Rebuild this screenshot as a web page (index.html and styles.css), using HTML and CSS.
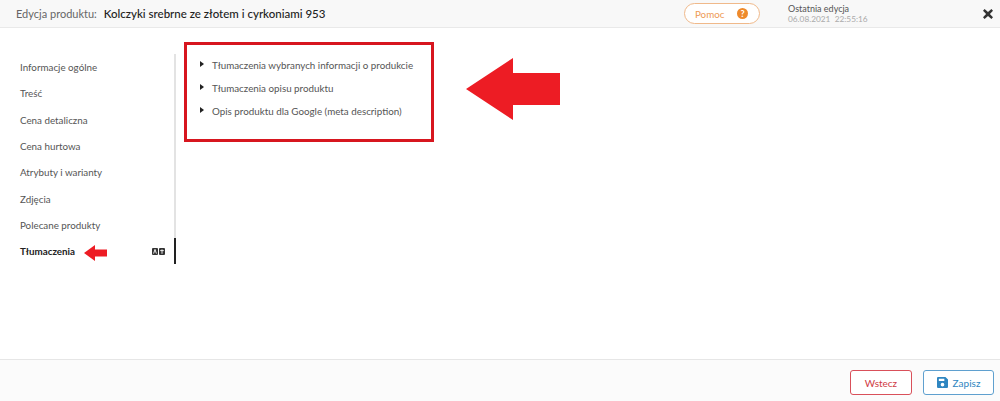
FILE: index.html
```html
<!DOCTYPE html>
<html lang="pl">
<head>
  <meta charset="UTF-8">
  <title>Edycja produktu</title>
  <link rel="stylesheet" href="styles.css">
</head>
<body>

<header class="topbar">
  <div class="title">
    <span class="title-label">Edycja produktu:</span>
    <span class="title-name">Kolczyki srebrne ze złotem i cyrkoniami 953</span>
  </div>
  <a class="help">
    <span>Pomoc</span>
    <span class="help-mark">?</span>
  </a>
  <div class="last-edit">
    <div class="last-edit-label">Ostatnia edycja</div>
    <div class="last-edit-date">06.08.2021 &nbsp;22:55:16</div>
  </div>
  <svg class="close" viewBox="0 0 10 10" width="10" height="10">
    <path d="M1.6 0 L5 3.1 L8.4 0 L10 1.7 L6.9 5 L10 8.3 L8.4 10 L5 6.9 L1.6 10 L0 8.3 L3.1 5 L0 1.7 Z" fill="#333"/>
  </svg>
</header>

<main class="content">
  <nav class="sidebar">
    <a class="nav-item">Informacje ogólne</a>
    <a class="nav-item">Treść</a>
    <a class="nav-item">Cena detaliczna</a>
    <a class="nav-item">Cena hurtowa</a>
    <a class="nav-item">Atrybuty i warianty</a>
    <a class="nav-item">Zdjęcia</a>
    <a class="nav-item">Polecane produkty</a>
    <a class="nav-item active">
      Tłumaczenia
      <svg class="nav-arrow" viewBox="0 0 23 16" width="23" height="16">
        <path d="M0 8 L11 0 L11 4.5 L23 4.5 L23 11.5 L11 11.5 L11 16 Z" fill="#ed1c24"/>
      </svg>
      <svg class="lang-icon" viewBox="0 0 13 7" width="13" height="7">
        <rect x="0" y="0" width="6" height="7" rx="1" fill="#333"/>
        <rect x="7" y="0" width="6" height="7" rx="1" fill="#333"/>
        <path d="M1.6 5.6 L3 1.4 L4.4 5.6 M8.2 2.6 H11.8 M10 1.4 V5.8" stroke="#fff" stroke-width="0.9" fill="none"/>
      </svg>
    </a>
  </nav>

  <section class="panel">
    <div class="panel-row"><span class="caret"></span>Tłumaczenia wybranych informacji o produkcie</div>
    <div class="panel-row"><span class="caret"></span>Tłumaczenia opisu produktu</div>
    <div class="panel-row"><span class="caret"></span>Opis produktu dla Google (meta description)</div>
  </section>

  <svg class="big-arrow" viewBox="0 0 94 62" width="94" height="62">
    <path d="M0 31 L47 0 L47 15 L94 15 L94 47 L47 47 L47 62 Z" fill="#ed1c24"/>
  </svg>
</main>

<footer class="actions">
  <button class="btn btn-back">Wstecz</button>
  <button class="btn btn-save">
    <svg viewBox="0 0 12 12" width="11" height="11">
      <path fill-rule="evenodd" d="M1.2 0 H9.2 L12 2.8 V10.8 A1.2 1.2 0 0 1 10.8 12 H1.2 A1.2 1.2 0 0 1 0 10.8 V1.2 A1.2 1.2 0 0 1 1.2 0 Z M2 1.8 V4.4 H8 V1.8 Z M6 6.4 A2 2 0 1 0 6 10.4 A2 2 0 1 0 6 6.4 Z" fill="#2f86c1"/>
    </svg>
    Zapisz
  </button>
</footer>

</body>
</html>
```

FILE: styles.css
```css
html, body {
  margin: 0;
  height: 100%;
}
body {
  width: 1000px;
  height: 401px;
  display: flex;
  flex-direction: column;
  overflow: hidden;
  background-color: white;
  font-family: Lato, "Open Sans", sans-serif;
  font-size: 10px;
  color: #555;
}

.topbar {
  height: 27px;
  flex: none;
  display: flex;
  align-items: center;
  background-color: #f8f8f8;
  border-bottom: 1px solid #e9e9e9;
  padding-left: 16px;
}
.title {
  flex: 1;
  font-size: 11px;
}
.title-label {
  color: #666;
  margin-right: 4px;
}
.title-name {
  color: #222;
  font-size: 11.5px;
  font-weight: 500;
}
.help {
  width: 76px;
  height: 21px;
  box-sizing: border-box;
  margin-right: 28px;
  padding: 0 11px 0 10px;
  display: flex;
  align-items: center;
  justify-content: space-between;
  border: 1px solid #f0b98a;
  border-radius: 11px;
  background-color: white;
  color: #ee9a55;
  font-size: 9.8px;
}
.help-mark {
  width: 11px;
  height: 11px;
  border-radius: 50%;
  background-color: #ee8a2c;
  color: white;
  font-size: 9px;
  font-weight: 700;
  line-height: 11px;
  text-align: center;
}
.last-edit {
  width: 195px;
  font-size: 9px;
  line-height: 10px;
  color: #555;
}
.last-edit-date {
  color: #aaa;
  font-size: 8.3px;
}
.close {
  margin-right: 7px;
}

.content {
  flex: 1;
  position: relative;
  display: flex;
  align-items: flex-start;
}
.sidebar {
  width: 176px;
  margin-top: 26px;
  margin-right: 8px;
  box-sizing: border-box;
  display: flex;
  flex-direction: column;
  border-right: 2px solid #e3e3e3;
}
.nav-item {
  height: 26.3px;
  padding-left: 20px;
  display: flex;
  align-items: center;
  font-size: 9.8px;
  color: #555;
}
.nav-item.active {
  margin-right: -2px;
  border-right: 2px solid #222;
  color: #222;
  font-weight: 700;
}
.nav-arrow {
  margin-left: 9px;
  margin-top: 3px;
}
.lang-icon {
  margin-left: auto;
  margin-right: 9px;
}

.panel {
  width: 250px;
  height: 100px;
  margin-top: 14px;
  box-sizing: border-box;
  padding: 8px 0 0 13px;
  border: 3px solid #d7161f;
}
.panel-row {
  height: 23.3px;
  display: flex;
  align-items: center;
  font-size: 9.8px;
  color: #555;
}
.caret {
  width: 0;
  height: 0;
  margin-right: 8px;
  margin-top: -2px;
  border-left: 4px solid #222;
  border-top: 3px solid transparent;
  border-bottom: 3px solid transparent;
}
.big-arrow {
  position: absolute;
  left: 466px;
  top: 30px;
}

.actions {
  height: 42px;
  flex: none;
  display: flex;
  align-items: flex-start;
  justify-content: flex-end;
  gap: 11px;
  padding: 10px 6px 0 0;
  box-sizing: border-box;
  background-color: #fbfbfb;
  border-top: 1px solid #e6e6e6;
}
.btn {
  height: 25px;
  display: flex;
  align-items: center;
  justify-content: center;
  gap: 5px;
  border-radius: 3px;
  background-color: white;
  font-family: Lato, sans-serif;
  font-size: 10px;
  padding: 0;
}
.btn-back {
  width: 62px;
  border: 1px solid #d9505a;
  color: #cf3a44;
}
.btn-save {
  width: 71px;
  border: 1px solid #5fa0cf;
  color: #2f86c1;
}
```
